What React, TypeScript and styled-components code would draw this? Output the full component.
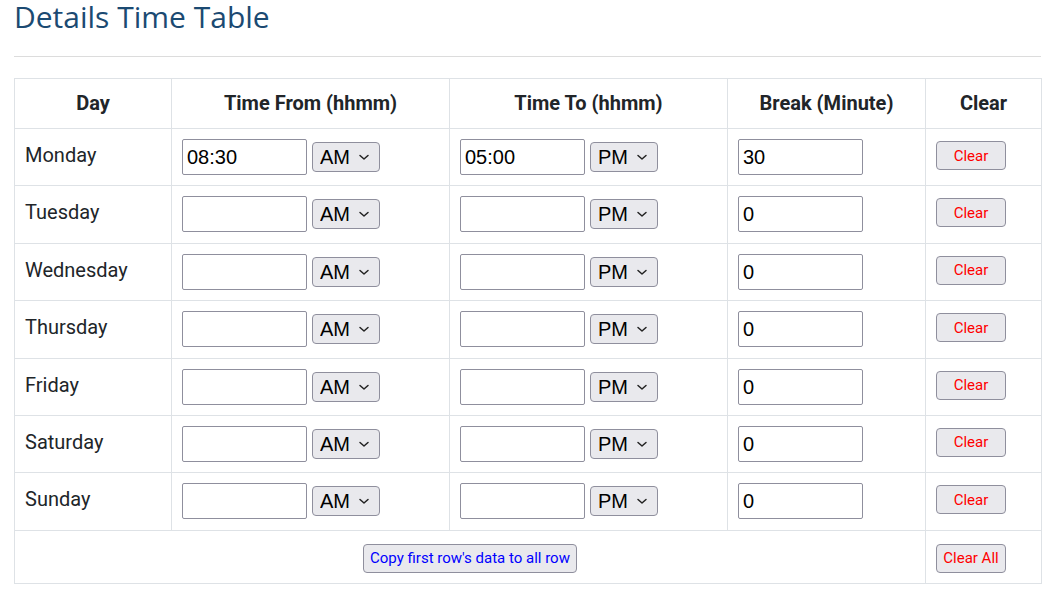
import React from "react";
import styled, { createGlobalStyle } from "styled-components";

const GlobalStyle = createGlobalStyle`
  html, body { margin: 0; padding: 0; background: #ffffff; }
  body { font-family: Roboto, "Liberation Sans", sans-serif; color: #212529; }
`;

const Page = styled.div`
  padding: 0 20px 0 14px;
  width: 1027px;
`;

const Title = styled.h2`
  margin: -4px 0 0;
  padding: 0;
  font-family: "Open Sans", Lato, sans-serif;
  font-weight: 400;
  font-size: 30px;
  line-height: 42px;
  color: #1b4a72;
`;

const Rule = styled.hr`
  margin: 18px 0 21px;
  border: 0;
  border-top: 1px solid #dcdcdc;
`;

const Table = styled.table`
  width: 1027px;
  border-collapse: collapse;
  table-layout: fixed;
`;

const Th = styled.th<{ $w: number }>`
  width: ${(p) => p.$w - 21}px;
  border: 1px solid #dee2e6;
  padding: 12px 10px 13px;
  font-size: 20px;
  line-height: 24px;
  font-weight: 700;
  text-align: center;
  color: #212529;
`;

const Td = styled.td`
  border: 1px solid #dee2e6;
  padding: 10px 10px 10.4px;
  vertical-align: top;
`;

const DayCell = styled(Td)`
  padding-top: 14px;
  font-size: 20px;
  line-height: 24px;
  color: #212529;
`;

const FooterCell = styled.td<{ $center?: boolean }>`
  border: 1px solid #dee2e6;
  padding: 13px 10px 10px;
  text-align: ${(p) => (p.$center ? "center" : "left")};
  vertical-align: top;
`;

const Controls = styled.div`
  display: flex;
  align-items: center;
  gap: 5px;
  height: 36px;
`;

const TextInput = styled.input`
  box-sizing: border-box;
  width: 125px;
  height: 36px;
  margin: 0;
  padding: 1px 4px 0;
  border: 1px solid #8f8f9d;
  border-radius: 2px;
  font-family: "Liberation Sans", Arial, sans-serif;
  font-size: 20px;
  color: #000;
  background: #fff;
  outline: none;
`;

const Select = styled.select`
  box-sizing: border-box;
  appearance: none;
  -webkit-appearance: none;
  width: 68px;
  height: 30px;
  margin: 0;
  padding: 0 0 0 7px;
  border: 1px solid #8f8f9d;
  border-radius: 4px;
  background-color: #e9e9ed;
  background-image: url("data:image/svg+xml;utf8,<svg xmlns='http://www.w3.org/2000/svg' width='12' height='8' viewBox='0 0 12 8'><path d='M2 2.5 L6 6 L10 2.5' fill='none' stroke='%23222' stroke-width='1.5' stroke-linecap='round' stroke-linejoin='round'/></svg>");
  background-repeat: no-repeat;
  background-position: right 9px center;
  font-family: "Liberation Sans", Arial, sans-serif;
  font-size: 20px;
  color: #000;
`;

const Button = styled.button<{ $tone: "red" | "blue"; $w?: number }>`
  box-sizing: border-box;
  height: 29px;
  ${(p) => (p.$w ? `width: ${p.$w}px;` : "")}
  margin: 0;
  padding: 0 6px;
  border: 1px solid #8f8f9d;
  border-radius: 4px;
  background: #e9e9ed;
  font-family: Roboto, "Liberation Sans", sans-serif;
  font-size: 15px;
  color: ${(p) => (p.$tone === "red" ? "#ff0000" : "#0000ff")};
  cursor: pointer;
`;

const ButtonWrap = styled.div`
  display: flex;
  align-items: center;
  height: 33px;
`;

const days = ["Monday", "Tuesday", "Wednesday", "Thursday", "Friday", "Saturday", "Sunday"];

export default function App() {
  return (
    <>
      <GlobalStyle />
      <Page>
        <Title>Details Time Table</Title>
        <Rule />
        <Table>
          <thead>
            <tr>
              <Th $w={157}>Day</Th>
              <Th $w={278}>Time From (hhmm)</Th>
              <Th $w={278}>Time To (hhmm)</Th>
              <Th $w={198}>Break (Minute)</Th>
              <Th $w={116}>Clear</Th>
            </tr>
          </thead>
          <tbody>
            {days.map((d, i) => (
              <tr key={d}>
                <DayCell>{d}</DayCell>
                <Td>
                  <Controls>
                    <TextInput defaultValue={i === 0 ? "08:30" : ""} />
                    <Select defaultValue="AM">
                      <option>AM</option>
                      <option>PM</option>
                    </Select>
                  </Controls>
                </Td>
                <Td>
                  <Controls>
                    <TextInput defaultValue={i === 0 ? "05:00" : ""} />
                    <Select defaultValue="PM">
                      <option>AM</option>
                      <option>PM</option>
                    </Select>
                  </Controls>
                </Td>
                <Td>
                  <Controls>
                    <TextInput defaultValue={i === 0 ? "30" : "0"} />
                  </Controls>
                </Td>
                <Td>
                  <ButtonWrap>
                    <Button $tone="red" $w={70}>Clear</Button>
                  </ButtonWrap>
                </Td>
              </tr>
            ))}
            <tr>
              <FooterCell colSpan={4} $center>
                <Button $tone="blue">Copy first row's data to all row</Button>
              </FooterCell>
              <FooterCell>
                <Button $tone="red" $w={70}>Clear All</Button>
              </FooterCell>
            </tr>
          </tbody>
        </Table>
      </Page>
    </>
  );
}
